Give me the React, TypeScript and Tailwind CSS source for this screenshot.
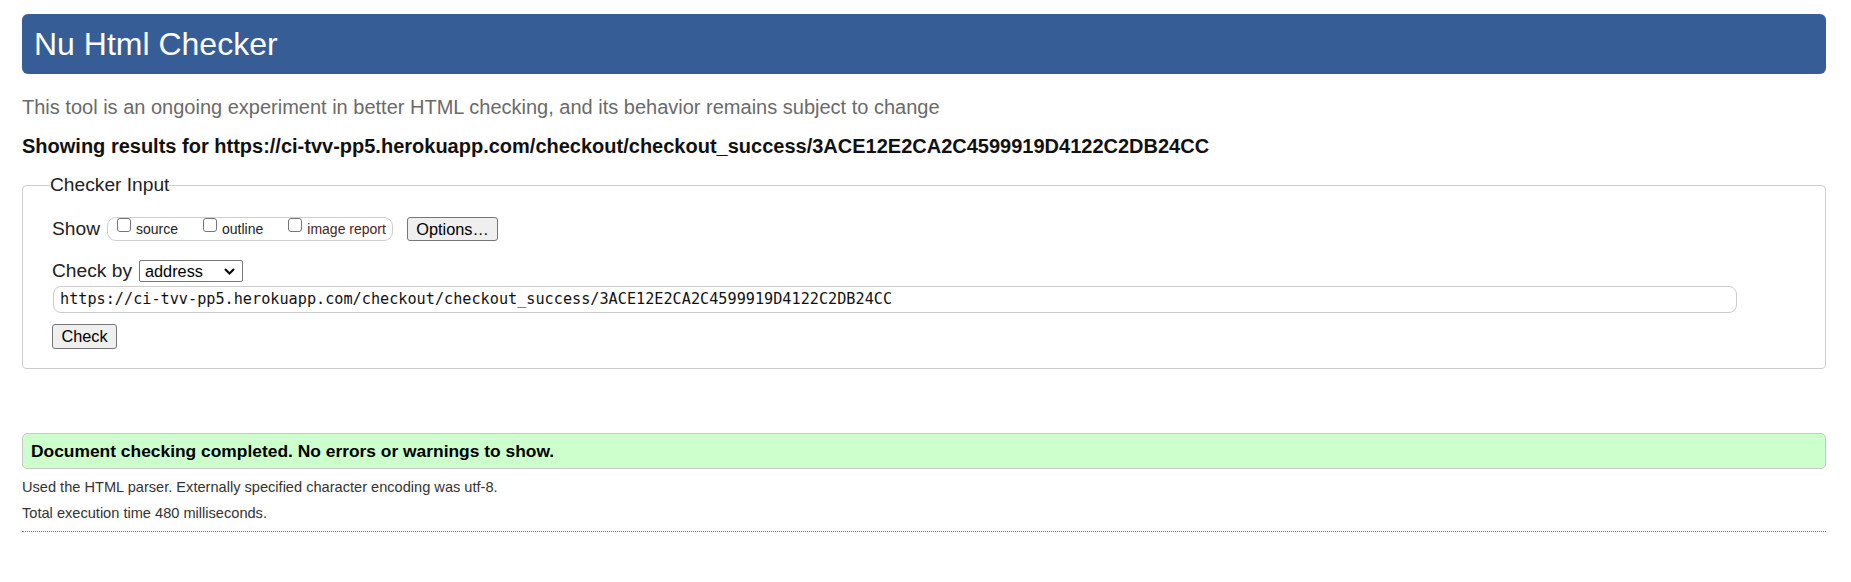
const sans = "font-['Liberation_Sans','Arial',sans-serif]";

const url =
  "https://ci-tvv-pp5.herokuapp.com/checkout/checkout_success/3ACE12E2CA2C4599919D4122C2DB24CC";

function Box({ label, color = "text-[#222]", first = false }: { label: string; color?: string; first?: boolean }) {
  return (
    <div className={`flex items-center ${first ? "" : "ml-[25px]"}`}>
      <span className="mb-[8px] block w-[14px] h-[14px] rounded-[3px] border border-[#767676] bg-white" />
      <span className={`ml-[5px] text-[14px] leading-[16px] ${color}`}>{label}</span>
    </div>
  );
}

export default function App() {
  return (
    <div className={`${sans} bg-white min-h-[582px] pl-[22px] pr-[25px] pt-[14px]`}>
      {/* Title bar */}
      <div className="flex items-center h-[60px] rounded-[6px] bg-[#365d95] pl-[12px]">
        <h1 className="text-[32px] leading-[36px] text-white font-normal">Nu Html Checker</h1>
      </div>

      <p className="mt-[21px] text-[20px] leading-[24px] text-[#6a6a6a]">
        This tool is an ongoing experiment in better HTML checking, and its behavior remains subject to change
      </p>
      <p className="mt-[15px] text-[20px] leading-[24px] font-bold text-[#111]">Showing results for {url}</p>

      {/* Checker input */}
      <fieldset className="mt-[16px] rounded-[4px] border border-[#cccccc] pl-[29px] pt-[21px] pb-[19px]">
        <legend className="-ml-[2px] text-[19.2px] leading-[22px] text-[#222]">Checker Input</legend>

        <div className="flex items-center h-[24px] text-[#222]">
          <span className="w-[55px] text-[19.2px] leading-[22px]">Show</span>
          <div className="flex items-center h-[24px] w-[286px] rounded-[9px] border border-[#cfcfcf] pl-[9px]">
            <Box label="source" first />
            <Box label="outline" />
            <Box label="image report" color="text-[#4a2323]" />
          </div>
          <button className="ml-[14px] flex items-center justify-center w-[91px] h-[24px] rounded-[3px] border border-[#767676] bg-[#efefef] text-[16.3px] text-black">
            Options…
          </button>
        </div>

        <div className="mt-[19px] flex items-center h-[22px] text-[#222]">
          <span className="w-[87px] text-[19.2px] leading-[22px]">Check by</span>
          <div className="flex items-center justify-between w-[104px] h-[22px] rounded-[2px] border border-[#767676] bg-white pl-[5px] pr-[7px] text-[16.3px] text-black">
            <span>address</span>
            <svg width="11" height="7" viewBox="0 0 11 7" fill="none">
              <path d="M1 1 L5.5 5.5 L10 1" stroke="#000" strokeWidth="2" />
            </svg>
          </div>
        </div>

        <div className="mt-[4px] ml-[1px] flex items-center w-[1684px] h-[27px] rounded-[8px] border border-[#cccccc] pl-[6px] font-['DejaVu_Sans_Mono',monospace] text-[15.2px] text-[#111]">
          {url}
        </div>

        <button className="mt-[11px] flex items-center justify-center w-[65px] h-[25px] rounded-[3px] border border-[#767676] bg-[#efefef] text-[16.3px] text-black">
          Check
        </button>
      </fieldset>

      {/* Result */}
      <div className="mt-[64px] flex items-center h-[36px] rounded-[5px] border border-[#c8c8c8] bg-[#ccffcc] pl-[8px]">
        <span className="text-[17.4px] font-bold text-black">Document checking completed. No errors or warnings to show.</span>
      </div>
      <p className="mt-[8px] text-[14.6px] leading-[20px] text-[#333]">
        Used the HTML parser. Externally specified character encoding was utf-8.
      </p>
      <p className="mt-[6px] text-[14.6px] leading-[20px] text-[#333]">Total execution time 480 milliseconds.</p>
      <div className="mt-[8px] border-t border-dotted border-[#777]" />
    </div>
  );
}
